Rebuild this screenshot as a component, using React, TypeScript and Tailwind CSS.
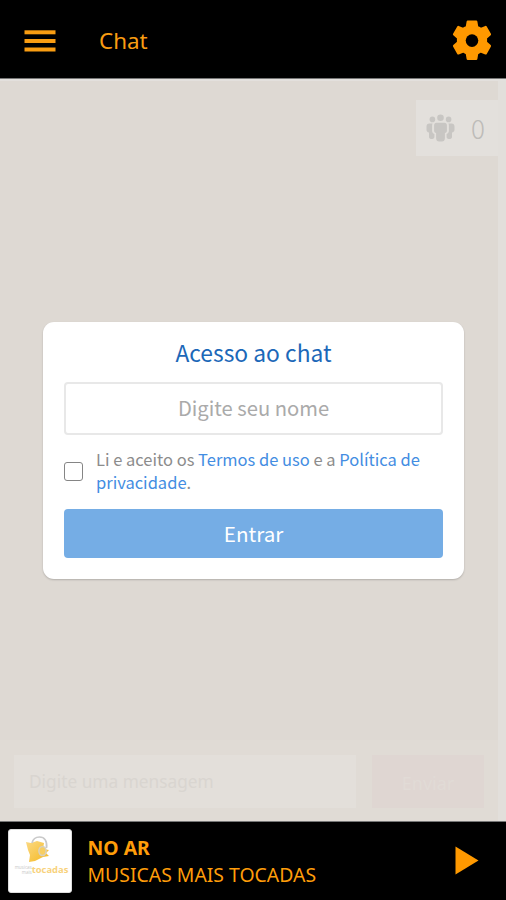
const sourceSans = "font-['Noto_Sans_CJK_SC',sans-serif]";

function MenuIcon() {
  return (
    <svg width="32" height="22" viewBox="0 0 32 22" fill="#f99d12">
      <rect x="0.5" y="0.3" width="31" height="4" />
      <rect x="0.5" y="9" width="31" height="4" />
      <rect x="0.5" y="17.5" width="31" height="4" />
    </svg>
  );
}

function GearIcon() {
  return (
    <svg width="40" height="42" viewBox="0 0 40 42" fill="#ff9900" stroke="#ff9900" strokeWidth="2.4" strokeLinejoin="round">
      <path d="M15.8 1.6h8.4l.9 5.3 3.7 2.1 4.9-1.9 4.2 7.3-4 3.5v4.600l4 3.500-4.200 7.300-4.900-2-3.700 2.100-.9 5.300h-8.400l-.9-5.300-3.700-2.100-4.900 2-4.200-7.300 4-3.500v-4.600l-4-3.500 4.200-7.300 4.900 1.900 3.700-2.100z" />
      <circle cx="20" cy="20.6" r="6.3" fill="#000" stroke="none" />
    </svg>
  );
}

function PeopleIcon() {
  return (
    <svg width="29" height="28" viewBox="0 0 29 28" fill="#c8c6c3">
      <circle cx="14.5" cy="3.8" r="3.3" />
      <circle cx="6.4" cy="5.4" r="2.8" />
      <circle cx="22.6" cy="5.4" r="2.8" />
      <path d="M10.5 8.8h8c1.5 0 2.4 1 2.4 2.4v5.6c0 1.3-.7 2-2 2.2v5.2c0 2-1.2 3.3-3 3.3h-2.8c-1.8 0-3-1.3-3-3.3V19c-1.3-.2-2-.9-2-2.2v-5.6c0-1.4.9-2.4 2.4-2.4z" />
      <path d="M3.4 9.6h3.2c-.4.8-.5 1.4-.5 2.2v5c0 1.5.8 2.7 2.3 3.3v2.6c0 1.4-.8 2.2-2 2.2H5c-1.3 0-2-.8-2-2.2v-4.2c-1.6-.4-2.5-1.4-2.5-2.8v-3.1c0-1.8 1.1-3 2.9-3z" />
      <path d="M25.6 9.6h-3.2c.4.8.5 1.4.5 2.2v5c0 1.5-.8 2.7-2.3 3.3v2.6c0 1.4.8 2.2 2 2.2H24c1.3 0 2-.8 2-2.2v-4.2c1.6-.4 2.5-1.4 2.5-2.8v-3.1c0-1.8-1.1-3-2.9-3z" />
    </svg>
  );
}

function StationLogo() {
  return (
    <div className="flex h-16 w-16 flex-col items-center rounded-[3px] border border-[#ddd] bg-white pt-[6px]">
      <svg width="28" height="28" viewBox="0 0 28 28" className="-ml-1">
        <defs>
          <linearGradient id="note" x1="0" y1="0" x2="1" y2="1">
            <stop offset="0" stopColor="#fbd984" />
            <stop offset="1" stopColor="#f5b81f" />
          </linearGradient>
        </defs>
        <path d="M2 6l5 1 6-2 7 2-1 6 6 1-3 3 3 3-6 1-4 2-4 2-6 1 1-7-2-5z" fill="url(#note)" />
        <path d="M8 7c1-4 4-6 7.5-6 5 0 8 4 7 11" fill="none" stroke="#c9c9c9" strokeWidth="1.7" />
        <ellipse cx="18.5" cy="15" rx="3.6" ry="4.5" fill="#f7ce62" stroke="#d6d0c0" strokeWidth="1.5" />
      </svg>
      <div className="mt-px flex w-full items-center justify-center font-['Open_Sans',sans-serif]">
        <div className="w-[20px] text-right text-[4.5px] leading-[5px] text-[#c8c8c8]">
          <p>musicas</p>
          <p>mais</p>
        </div>
        <span className="text-[9.4px] leading-[10px] font-bold text-[#f8d27c]">tocadas</span>
      </div>
    </div>
  );
}

function Header() {
  return (
    <header className="flex h-[79px] shrink-0 items-center border-b border-[#777] bg-black pt-[4px] pr-[14px] pl-6">
      <button type="button" aria-label="Menu">
        <MenuIcon />
      </button>
      <h1 className="ml-[43px] text-[22.4px] leading-8 text-[#f99d12]">Chat</h1>
      <button type="button" aria-label="Ajustes" className="ml-auto">
        <GearIcon />
      </button>
    </header>
  );
}

function AccessCard() {
  return (
    <form className={`${sourceSans} h-[257px] w-[421px] rounded-[11px] bg-white px-[21px] shadow-[0_1px_2px_rgba(0,0,0,0.2)]`}>
      <h2 className="pt-[13px] text-center text-[22.8px] leading-9 text-[#1c68b8]">Acesso ao chat</h2>
      <input
        className="mt-[11px] block h-[53px] w-full rounded-[4px] border-2 border-[#e8e8e8] bg-white pb-[2px] text-center text-[20.2px] outline-none placeholder:text-[#aaa]"
        placeholder="Digite seu nome"
      />
      <label className="mt-[13px] flex h-[46px] items-center text-[16.5px] leading-[23px] text-[#8c8c8c]">
        <input type="checkbox" className="mr-[13px] h-[19px] w-[19px] shrink-0 appearance-none rounded-[3px] border-[1.5px] border-[#858585]" />
        <span className="whitespace-nowrap">
          Li e aceito os <a className="text-[#438de2]">Termos de uso</a> e a <a className="text-[#438de2]">Política de</a>
          <br />
          <a className="text-[#438de2]">privacidade</a>.
        </span>
      </label>
      <button type="button" className="mt-[15px] block h-[49px] w-full rounded-[4px] bg-[#75ade5] text-[20.6px] leading-[49px] text-white">
        Entrar
      </button>
    </form>
  );
}

function Player() {
  return (
    <footer className="flex h-[79px] shrink-0 items-center border-t border-[#777] bg-black pl-2 text-[#ff9d0a]">
      <StationLogo />
      <div className="ml-[15.5px] text-[19.4px] leading-[27px]">
        <p className="font-bold">NO AR</p>
        <p>MUSICAS MAIS TOCADAS</p>
      </div>
      <button type="button" aria-label="Tocar" className="mr-[27px] mb-[2px] ml-auto">
        <svg width="24" height="29" viewBox="0 0 24 29" fill="#ff9900">
          <path d="M0.5 0.5L23.5 14.5L0.5 28.5z" />
        </svg>
      </button>
    </footer>
  );
}

export default function App() {
  return (
    <div className="flex h-[900px] w-[506px] flex-col overflow-hidden bg-black font-['Noto_Sans',sans-serif]">
      <Header />
      <main className="relative flex h-[742px] border-t-2 border-[#e3e0dd] bg-[#ded9d3]">
        <div className="flex w-[498px] flex-col">
          <div className="mt-[19px] flex h-[56px] w-[82px] items-center self-end bg-[#e3e0dc] pl-[10px]">
            <PeopleIcon />
            <span className={`${sourceSans} ml-[16px] text-[26px] leading-none font-light text-[#bdbbb8]`}>0</span>
          </div>
          <div className="mt-auto flex h-[81px] bg-[#e0dbd5] pt-[15px] pl-[14px]">
            <div className="h-[53px] w-[342px] bg-[#e3dfda] pl-[15px] text-[17.3px] leading-[53px] text-[#d9d5d0]">
              Digite uma mensagem
            </div>
            <div className="ml-[16px] h-[53px] w-[112px] bg-[#dfd6d2] text-center text-[18px] leading-[56px] text-[#e1dbd6]">
              Enviar
            </div>
          </div>
        </div>
        <div className="w-2 bg-[#e2dfdb]" />
        <div className="absolute inset-0 flex items-start justify-center pt-[241px] pl-px">
          <AccessCard />
        </div>
      </main>
      <Player />
    </div>
  );
}
